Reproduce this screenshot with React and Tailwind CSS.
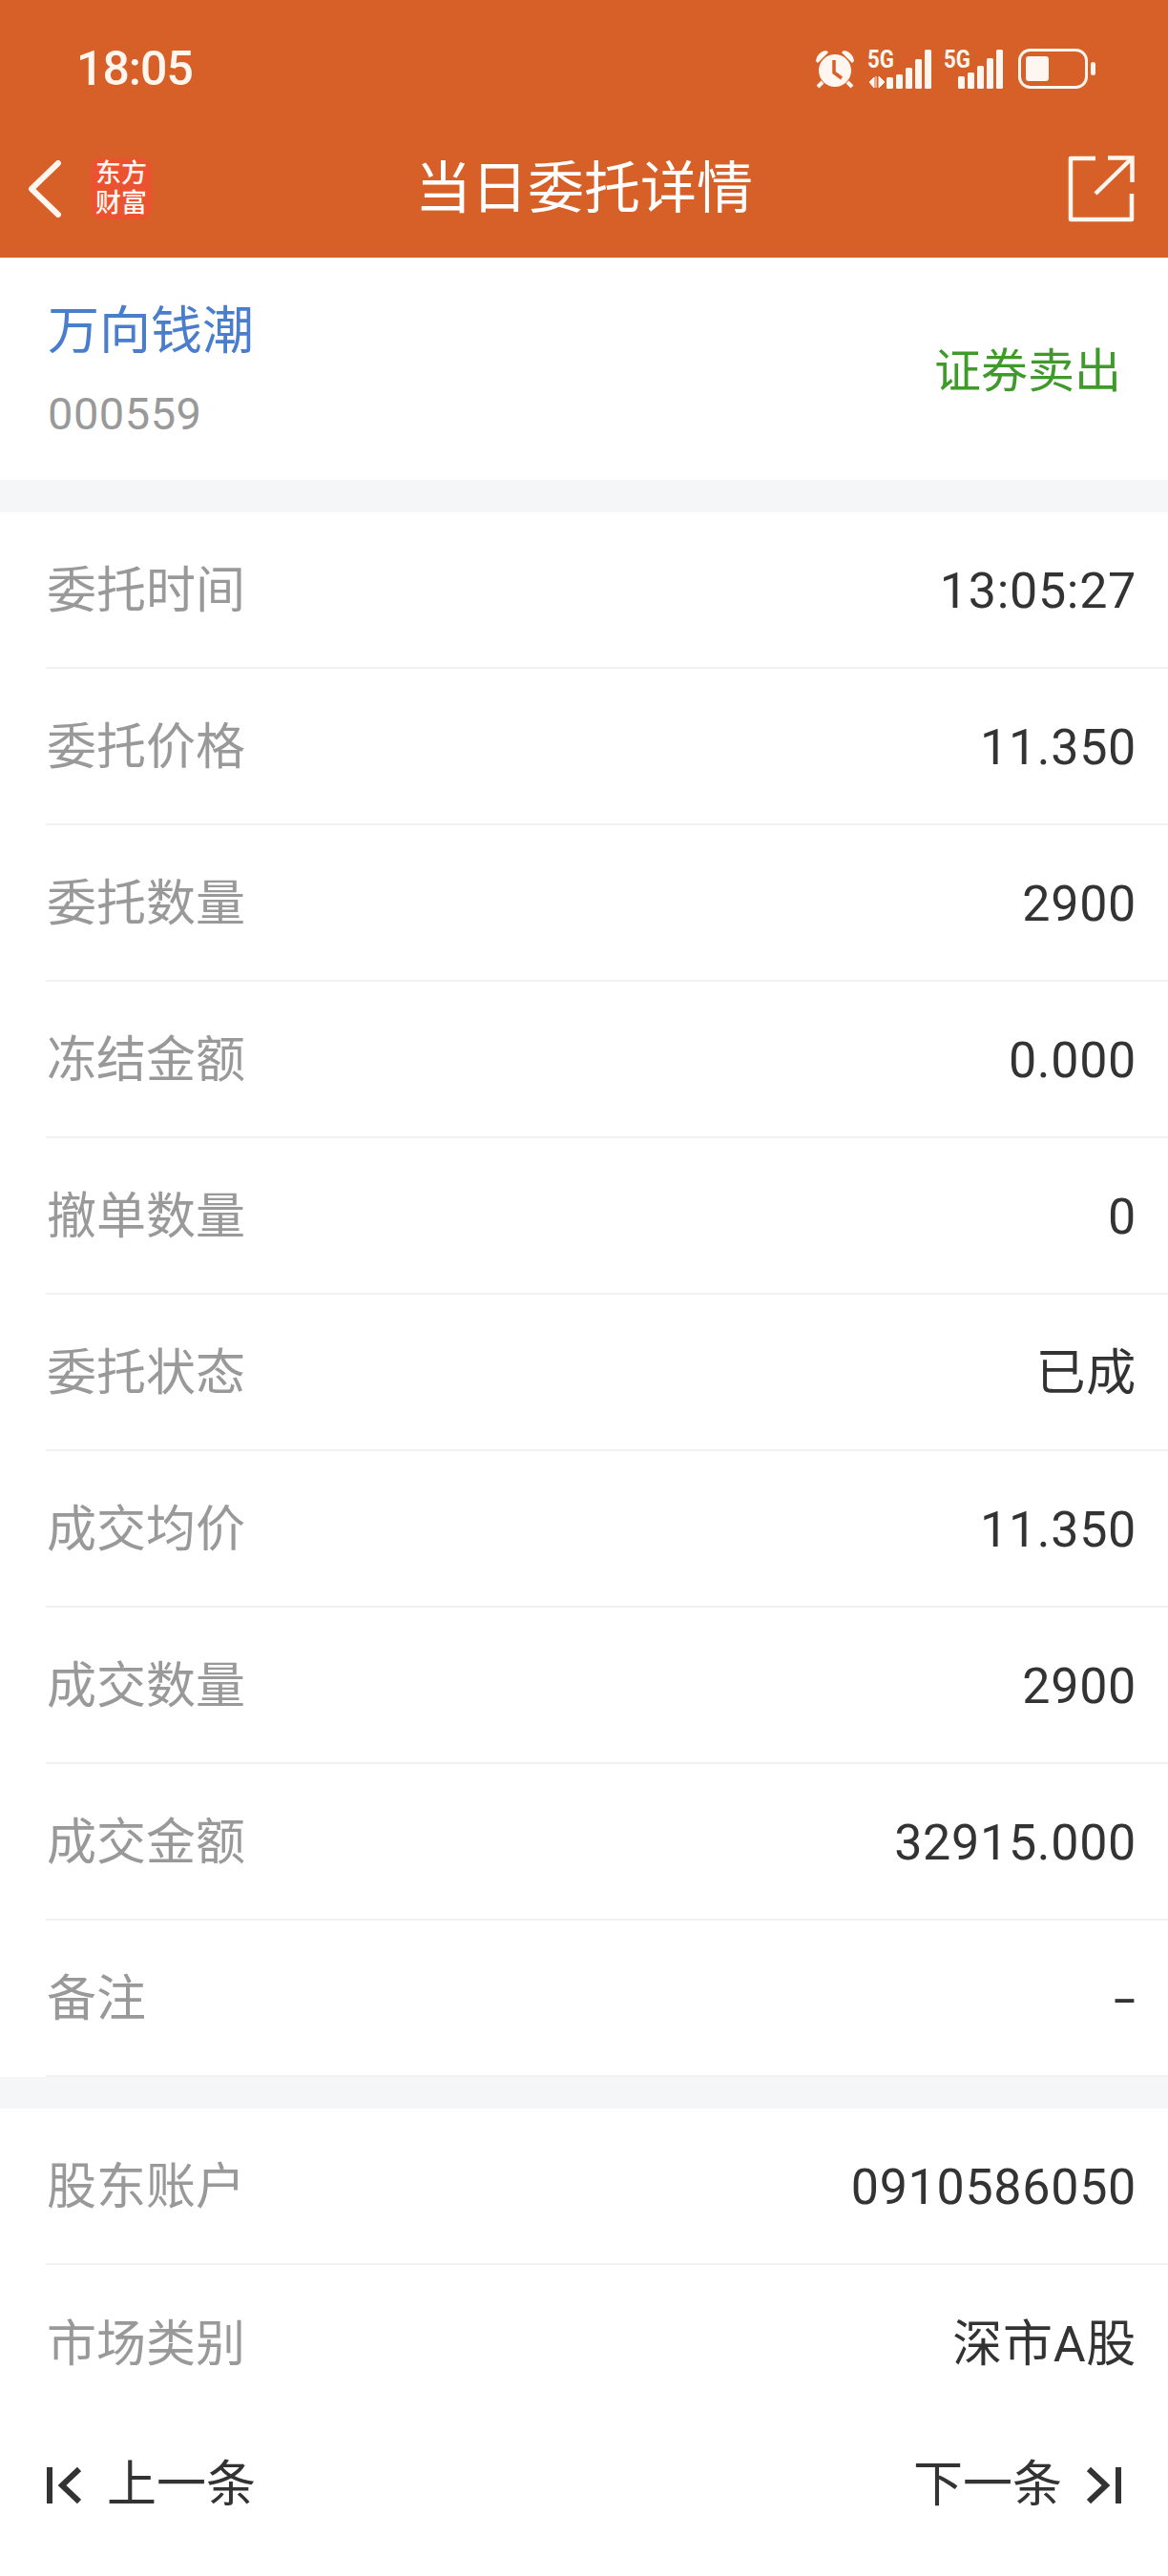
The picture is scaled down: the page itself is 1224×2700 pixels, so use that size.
const FONT = "font-['Roboto','Noto_Sans_CJK_SC',sans-serif]";

const mainRows = [
  ['委托时间', '13:05:27'],
  ['委托价格', '11.350'],
  ['委托数量', '2900'],
  ['冻结金额', '0.000'],
  ['撤单数量', '0'],
  ['委托状态', '已成'],
  ['成交均价', '11.350'],
  ['成交数量', '2900'],
  ['成交金额', '32915.000'],
  ['备注', '-'],
];

const accountRows = [
  ['股东账户', '0910586050'],
  ['市场类别', '深市A股'],
];

function Row({ label, value, border = true }) {
  return (
    <div className={`ml-[48px] h-[164px] pt-[4px] flex items-center justify-between pr-[33px] ${border ? 'border-b-2 border-[#f1f1f1]' : ''}`}>
      <span className="text-[52px] text-[#999999] ml-[1px]">{label}</span>
      {/* the dash is wider in the reference than in Roboto */}
      <span className={`text-[52px] text-[#333333] tracking-[0.7px] ${value === '-' ? 'inline-block origin-right scale-x-[1.6]' : ''}`}>{value}</span>
    </div>
  );
}

function AlarmIcon() {
  return (
    <svg width="42" height="42" viewBox="0 0 42 42" className="text-[#fff6f0]">
      <path d="M1 13 C2 6 7 2 12 2 L14 4 L3 15 Z" fill="currentColor" />
      <path d="M41 13 C40 6 35 2 30 2 L28 4 L39 15 Z" fill="currentColor" />
      <circle cx="21" cy="23" r="17" fill="currentColor" />
      <path d="M20 12 L20 25 L28 31" fill="none" stroke="#d66028" strokeWidth="3.5" />
      <path d="M8 35 L3 40 M34 35 L39 40" stroke="currentColor" strokeWidth="4" />
    </svg>
  );
}

function Signal({ arrows }) {
  return (
    <svg width={arrows ? 68 : 62} height="42" viewBox={arrows ? '0 0 68 42' : '0 0 62 42'} className="text-[#fff6f0] overflow-visible">
      <text x="0" y="20" fontSize="25" fontWeight="700" fontFamily="Roboto, sans-serif" fill="currentColor" textLength="28" lengthAdjust="spacingAndGlyphs">5G</text>
      {arrows && <path d="M2 35 L7 30 L7 41 Z M9 29 L9 41 M12 29 L12 41 L18 35 Z" fill="currentColor" stroke="currentColor" strokeWidth="1" />}
      {(arrows ? [[20, 30], [30, 27], [40, 20], [50, 11], [60, 1]] : [[15, 29], [25, 25], [35, 18], [45, 10], [55, 1]]).map(([x, y]) => (
        <rect key={x} x={x} y={y} width="7" height={42 - y} rx="1.5" fill="currentColor" />
      ))}
    </svg>
  );
}

function Battery() {
  return (
    <svg width="82" height="42" viewBox="0 0 82 42" className="text-[#fff6f0]">
      <rect x="1.5" y="1.5" width="70" height="39" rx="11" fill="none" stroke="currentColor" strokeWidth="3" />
      <rect x="8" y="8" width="24" height="26" rx="3" fill="currentColor" />
      <rect x="76" y="14" width="5" height="14" rx="2.5" fill="currentColor" />
    </svg>
  );
}

function BackIcon() {
  return (
    <svg width="36" height="60" viewBox="0 0 36 60" fill="none" stroke="#fff6f0" strokeWidth="6" strokeLinecap="round" strokeLinejoin="round">
      <path d="M32 3 L4 30 L32 57" />
    </svg>
  );
}

function ShareIcon() {
  return (
    <svg width="70" height="70" viewBox="0 0 70 70" fill="none" stroke="#fff6f0" strokeWidth="4.5">
      <path d="M29 3 H3 V67 H67 V40" strokeLinejoin="round" />
      <path d="M42 2.5 H67.5 V28" />
      <path d="M29 40 L67 3" />
    </svg>
  );
}

function EdgeIcon({ flip }) {
  return (
    <svg width="36" height="40" viewBox="0 0 36 40" fill="none" stroke="#333333" strokeWidth="6" className={flip ? '-scale-x-100' : ''}>
      <path d="M3 1 V39" />
      <path d="M34 3 L16 20 L34 37" />
    </svg>
  );
}

export default function App() {
  return (
    <div className={`w-[1224px] h-[2700px] bg-white overflow-hidden ${FONT}`}>
      <header className="h-[270px] bg-[#d66028] text-white">
        <div className="h-[122px] pt-[22px] pl-[80px] pr-[75px] flex items-center justify-between">
          <span className="text-[50px] font-medium text-[#fff6f0] tracking-[-1px]">18:05</span>
          <div className="flex items-center">
            <AlarmIcon />
            <div className="ml-[13px]"><Signal arrows /></div>
            <div className="ml-[12px]"><Signal /></div>
            <div className="ml-[16px]"><Battery /></div>
          </div>
        </div>
        <div className="relative h-[148px] pt-[5px] flex items-center justify-center">
          <div className="absolute left-[29px] top-[44px] flex items-center">
            <BackIcon />
            <div className="ml-[30px] w-[64px] h-[64px] rounded-[12px] bg-[#eb5230] flex flex-col items-center justify-center text-[27px] leading-[31px] font-medium text-[#fff6f0]">
              <span>东方</span>
              <span>财富</span>
            </div>
          </div>
          <h1 className="text-[59px] font-normal text-white">当日委托详情</h1>
          <div className="absolute right-[35px] top-[41px]"><ShareIcon /></div>
        </div>
      </header>

      <section className="h-[233px] pl-[50px] pr-[49px] flex items-center justify-between">
        <div className="flex flex-col pt-[9px]">
          <span className="text-[54px] leading-[72px] text-[#4a7dcc]">万向钱潮</span>
          <span className="mt-[14px] text-[47px] leading-[72px] text-[#999999] tracking-[0.5px]">000559</span>
        </div>
        <span className="pt-[6px] text-[49px] text-[#3f9a2b]">证券卖出</span>
      </section>

      <div className="h-[34px] bg-[#f5f6f8]" />
      {mainRows.map(([label, value]) => (
        <Row key={label} label={label} value={value} />
      ))}
      <div className="h-[33px] bg-[#f5f6f8]" />
      {accountRows.map(([label, value], i) => (
        <Row key={label} label={label} value={value} border={i === 0} />
      ))}

      <footer className="h-[128px] pt-[6px] pl-[49px] pr-[49px] flex items-center justify-between text-[52px] text-[#333333]">
        <div className="flex items-center gap-[27px]">
          <EdgeIcon />
          <span>上一条</span>
        </div>
        <div className="flex items-center gap-[26px]">
          <span>下一条</span>
          <EdgeIcon flip />
        </div>
      </footer>
    </div>
  );
}
